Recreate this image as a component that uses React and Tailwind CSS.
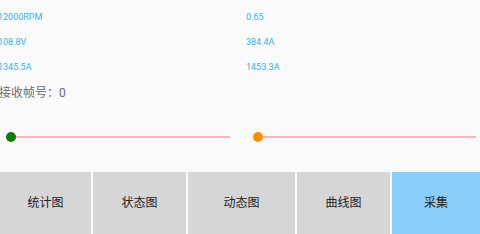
const values = [
  ['12000RPM', '0.65'],
  ['108.8V', '384.4A'],
  ['1345.5A', '1453.3A'],
];

const tabs = [
  { label: '统计图', w: 'w-[91px]' },
  { label: '状态图', w: 'w-[93px]' },
  { label: '动态图', w: 'w-[107px]' },
  { label: '曲线图', w: 'w-[93px]' },
  { label: '采集', w: 'flex-1', active: true },
];

function Slider({ thumb, pad }) {
  return (
    <div className={`flex h-[12px] flex-1 items-center ${pad}`}>
      <div className={`h-[10px] w-[10px] shrink-0 rounded-full ${thumb}`} />
      <div className="h-[1.5px] flex-1 bg-[#f5b8b8]" />
    </div>
  );
}

export default function App() {
  return (
    <div
      className="flex h-[234px] w-[480px] flex-col overflow-hidden bg-[#fafafa]"
      style={{ fontFamily: 'Roboto, "Noto Sans CJK SC", sans-serif' }}
    >
      <div className="flex flex-col pt-[10px]">
        {values.map(([a, b]) => (
          <div key={a} className="flex h-[25px] text-[9px] leading-[14px] text-[#33b5e5]">
            <div className="ml-[-2px] w-[248px]">{a}</div>
            <div>{b}</div>
          </div>
        ))}
        <div className="ml-[-1px] text-[12px] leading-[16px] text-[#6b6b6b]">接收帧号：0</div>
      </div>

      <div className="mt-[30px] flex">
        <Slider thumb="bg-[#0a7d0a]" pad="pl-[6px] pr-[10px]" />
        <Slider thumb="bg-[#fb8c00]" pad="pl-[13px] pr-[4px]" />
      </div>

      <div className="mt-[29px] flex h-[62px] gap-[2px]">
        {tabs.map((t) => (
          <div
            key={t.label}
            className={`flex items-center justify-center text-[12px] text-[#222] ${t.w} ${
              t.active ? 'bg-[#87cefa]' : 'bg-[#d6d6d6]'
            }`}
          >
            {t.label}
          </div>
        ))}
      </div>
    </div>
  );
}
